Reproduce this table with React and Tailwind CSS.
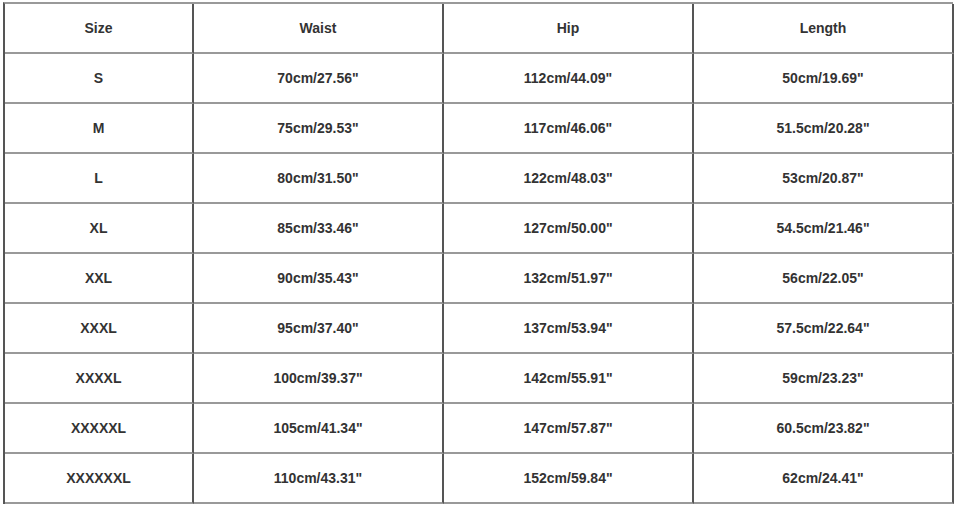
import React from "react";

const rows = [
  ["Size", "Waist", "Hip", "Length"],
  ["S", "70cm/27.56''", "112cm/44.09''", "50cm/19.69''"],
  ["M", "75cm/29.53''", "117cm/46.06''", "51.5cm/20.28''"],
  ["L", "80cm/31.50''", "122cm/48.03''", "53cm/20.87''"],
  ["XL", "85cm/33.46''", "127cm/50.00''", "54.5cm/21.46''"],
  ["XXL", "90cm/35.43''", "132cm/51.97''", "56cm/22.05''"],
  ["XXXL", "95cm/37.40''", "137cm/53.94''", "57.5cm/22.64''"],
  ["XXXXL", "100cm/39.37''", "142cm/55.91''", "59cm/23.23''"],
  ["XXXXXL", "105cm/41.34''", "147cm/57.87''", "60.5cm/23.82''"],
  ["XXXXXXL", "110cm/43.31''", "152cm/59.84''", "62cm/24.41''"],
];

export default function App() {
  return (
    <div className="w-[956px] h-[506px] bg-white pt-[2px] pl-[3px] font-['Liberation_Sans',Arial,sans-serif]">
      <div className="grid grid-cols-[189px_250px_250px_260px] w-[950px] border-t-2 border-l-2 border-t-[#999] border-l-[#555]">
        {rows.map((row, i) =>
          row.map((cell, j) => (
            <div
              key={`${i}-${j}`}
              className="h-[50px] flex items-center justify-center border-b-2 border-r-2 border-b-[#999] border-r-[#555] text-[14px] font-bold text-[#333]"
            >
              {cell.replace("''", '"')}
            </div>
          ))
        )}
      </div>
    </div>
  );
}
